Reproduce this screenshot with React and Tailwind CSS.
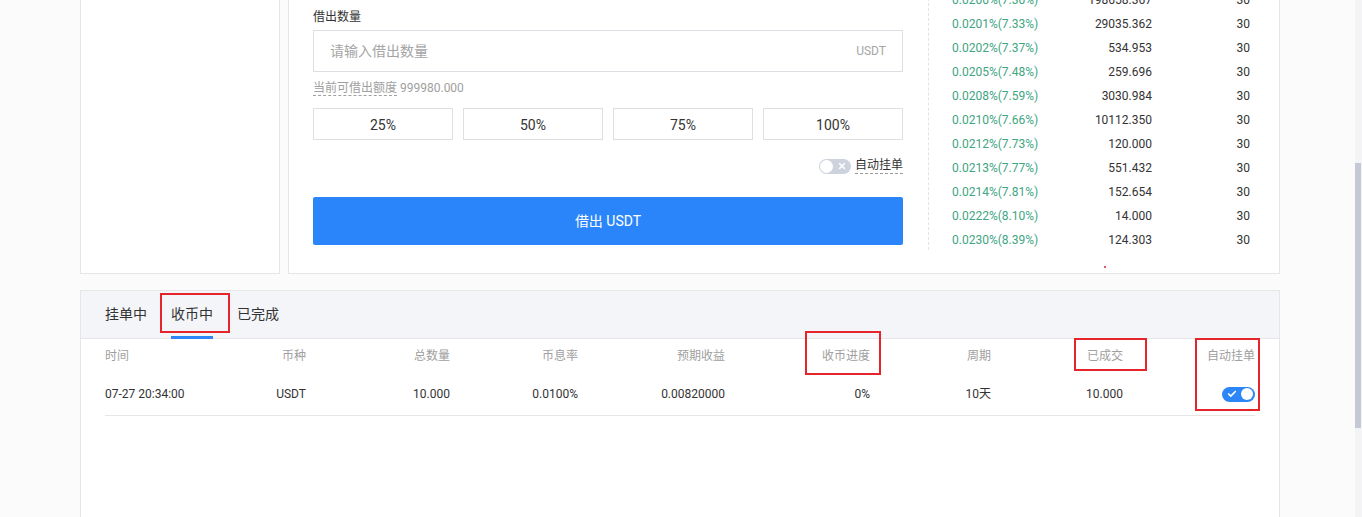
import { Check, X } from "lucide-react";

const book = [
  ["0.0200%(7.30%)", "198658.367"],
  ["0.0201%(7.33%)", "29035.362"],
  ["0.0202%(7.37%)", "534.953"],
  ["0.0205%(7.48%)", "259.696"],
  ["0.0208%(7.59%)", "3030.984"],
  ["0.0210%(7.66%)", "10112.350"],
  ["0.0212%(7.73%)", "120.000"],
  ["0.0213%(7.77%)", "551.432"],
  ["0.0214%(7.81%)", "152.654"],
  ["0.0222%(8.10%)", "14.000"],
  ["0.0230%(8.39%)", "124.303"],
];

const columnas = [
  { titulo: "时间", valor: "07-27 20:34:00", w: "w-[125px] text-left" },
  { titulo: "币种", valor: "USDT", w: "w-[76px] text-right" },
  { titulo: "总数量", valor: "10.000", w: "w-[144px] text-right" },
  { titulo: "币息率", valor: "0.0100%", w: "w-[128px] text-right" },
  { titulo: "预期收益", valor: "0.00820000", w: "w-[147px] text-right" },
  { titulo: "收币进度", valor: "0%", w: "w-[145px] text-right", marca: "progreso" },
  { titulo: "周期", valor: "10天", w: "w-[121px] text-right" },
  { titulo: "已成交", valor: "10.000", w: "w-[132px] text-right", marca: "hecho" },
  { titulo: "自动挂单", valor: null, w: "w-[132px] text-right", marca: "auto" },
];

function ToggleOff() {
  return (
    <span className="relative inline-flex h-[15px] w-[32px] items-center rounded-full bg-[#cdd3dc]">
      <span className="absolute left-[1px] h-[13px] w-[13px] rounded-full bg-white" />
      <X className="absolute right-[4px] h-[10px] w-[10px] text-white" strokeWidth={3.5} />
    </span>
  );
}

function ToggleOn() {
  return (
    <span className="relative inline-flex h-[15px] w-[33px] items-center rounded-full bg-[#2d86f7]">
      <Check className="absolute left-[5px] h-[10px] w-[10px] text-white" strokeWidth={4} />
      <span className="absolute right-[2px] h-[12px] w-[12px] rounded-full bg-white" />
    </span>
  );
}

export default function App() {
  return (
    <div
      className="flex h-[517px] w-full overflow-hidden bg-[#fbfbfc] text-[#333]"
      style={{ fontFamily: "Roboto, 'Noto Sans CJK SC', sans-serif" }}
    >
      <div className="w-[1355px] shrink-0">
        <div className="ml-[80px] w-[1200px]">
          {/* parte superior */}
          <div className="flex h-[274px] gap-[8px]">
            <div className="w-[200px] border-x border-b border-[#e6e6e6] bg-white" />
            <div className="flex flex-1 border-x border-b border-[#e6e6e6] bg-white pl-[24px]">
              <div className="w-[590px] pt-[9px]">
                <div className="h-[16px] text-[12px] leading-[16px]">借出数量</div>
                <div className="mt-[5px] flex h-[42px] items-center justify-between border border-[#dcdfe4] px-[16px]">
                  <span className="text-[14px] text-[#a5a5a5]">请输入借出数量</span>
                  <span className="text-[12px] text-[#a5a5a5]">USDT</span>
                </div>
                <div className="mt-[8px] h-[16px] text-[12px] leading-[16px] text-[#a0a0a0]">
                  <span className="border-b border-dashed border-[#a0a0a0]">当前可借出额度</span>{" "}
                  999980.000
                </div>
                <div className="mt-[12px] grid grid-cols-4 gap-[10px]">
                  {["25%", "50%", "75%", "100%"].map((p) => (
                    <div
                      key={p}
                      className="flex h-[32px] items-center justify-center border border-[#dcdfe4] pt-[2px] text-[14px]"
                    >
                      {p}
                    </div>
                  ))}
                </div>
                <div className="mt-[17px] flex h-[18px] items-center justify-end gap-[4px]">
                  <ToggleOff />
                  <span className="border-b border-dashed border-[#999] text-[12px] leading-[15px]">
                    自动挂单
                  </span>
                </div>
                <div className="mt-[22px] flex h-[48px] items-center justify-center rounded-[2px] bg-[#2a85fb] text-[14px] text-white">
                  借出 USDT
                </div>
              </div>
              <div className="ml-[25px] flex flex-1 flex-col">
                <div className="-mt-[12px] h-[262px] border-l border-dashed border-[#e3e3e3] pl-[23px]">
                  {book.map(([tasa, cant]) => (
                    <div key={tasa} className="flex h-[24px] items-center text-[12px]">
                      <span className="w-[120px] text-[#40a582]">{tasa}</span>
                      <span className="w-[80px] text-right">{cant}</span>
                      <span className="w-[98px] text-right">30</span>
                    </div>
                  ))}
                </div>
                <div className="ml-[176px] mt-[16px] h-[2px] w-[2px] rounded-full bg-[#e0202a]" />
              </div>
            </div>
          </div>

          {/* parte inferior */}
          <div className="mt-[16px] h-[300px] border border-[#e6e6e6] bg-white">
            <div className="flex h-[48px] items-end gap-[24px] border-b border-[#e6e6e6] bg-[#f3f5f8] pl-[24px]">
              <div className="flex h-full items-center pb-[1px] text-[14px]">挂单中</div>
              <div className="relative flex h-full flex-col items-center justify-center pb-[1px] text-[14px]">
                <span>收币中</span>
                <span className="absolute bottom-[-1px] h-[3px] w-[42px] bg-[#2d86f7]" />
                <span className="absolute left-[-11px] top-[2px] h-[40px] w-[70px] border-2 border-[#e5242c]" />
              </div>
              <div className="flex h-full items-center pb-[1px] text-[14px]">已完成</div>
            </div>
            <div className="mx-[24px]">
              <div className="flex h-[33px] items-center text-[12px] text-[#a0a0a0]">
                {columnas.map((c) => (
                  <div key={c.titulo} className={`relative ${c.w}`}>
                    {c.titulo}
                    {c.marca === "progreso" && (
                      <span className="absolute right-[-11px] top-[-16px] h-[44px] w-[76px] border-2 border-[#e5242c]" />
                    )}
                    {c.marca === "hecho" && (
                      <span className="absolute right-[-24px] top-[-9px] h-[33px] w-[73px] border-2 border-[#e5242c]" />
                    )}
                    {c.marca === "auto" && (
                      <span className="absolute right-[-5px] top-[-9px] h-[73px] w-[65px] border-2 border-[#e5242c]" />
                    )}
                  </div>
                ))}
              </div>
              <div className="flex h-[44px] items-center border-b border-[#e6e6e6] pt-[1px] text-[12px]">
                {columnas.map((c) => (
                  <div key={c.titulo} className={`flex ${c.w} ${c.valor ? "" : "justify-end"}`}>
                    {c.valor ? <span className="w-full">{c.valor}</span> : <ToggleOn />}
                  </div>
                ))}
              </div>
            </div>
          </div>
        </div>
      </div>

      {/* barra de desplazamiento */}
      <div className="flex w-[7px] flex-col bg-[#f4f4f6]">
        <div className="h-[163px]" />
        <div className="h-[265px] w-[6px] bg-[#c4c9d3]" />
      </div>
    </div>
  );
}
